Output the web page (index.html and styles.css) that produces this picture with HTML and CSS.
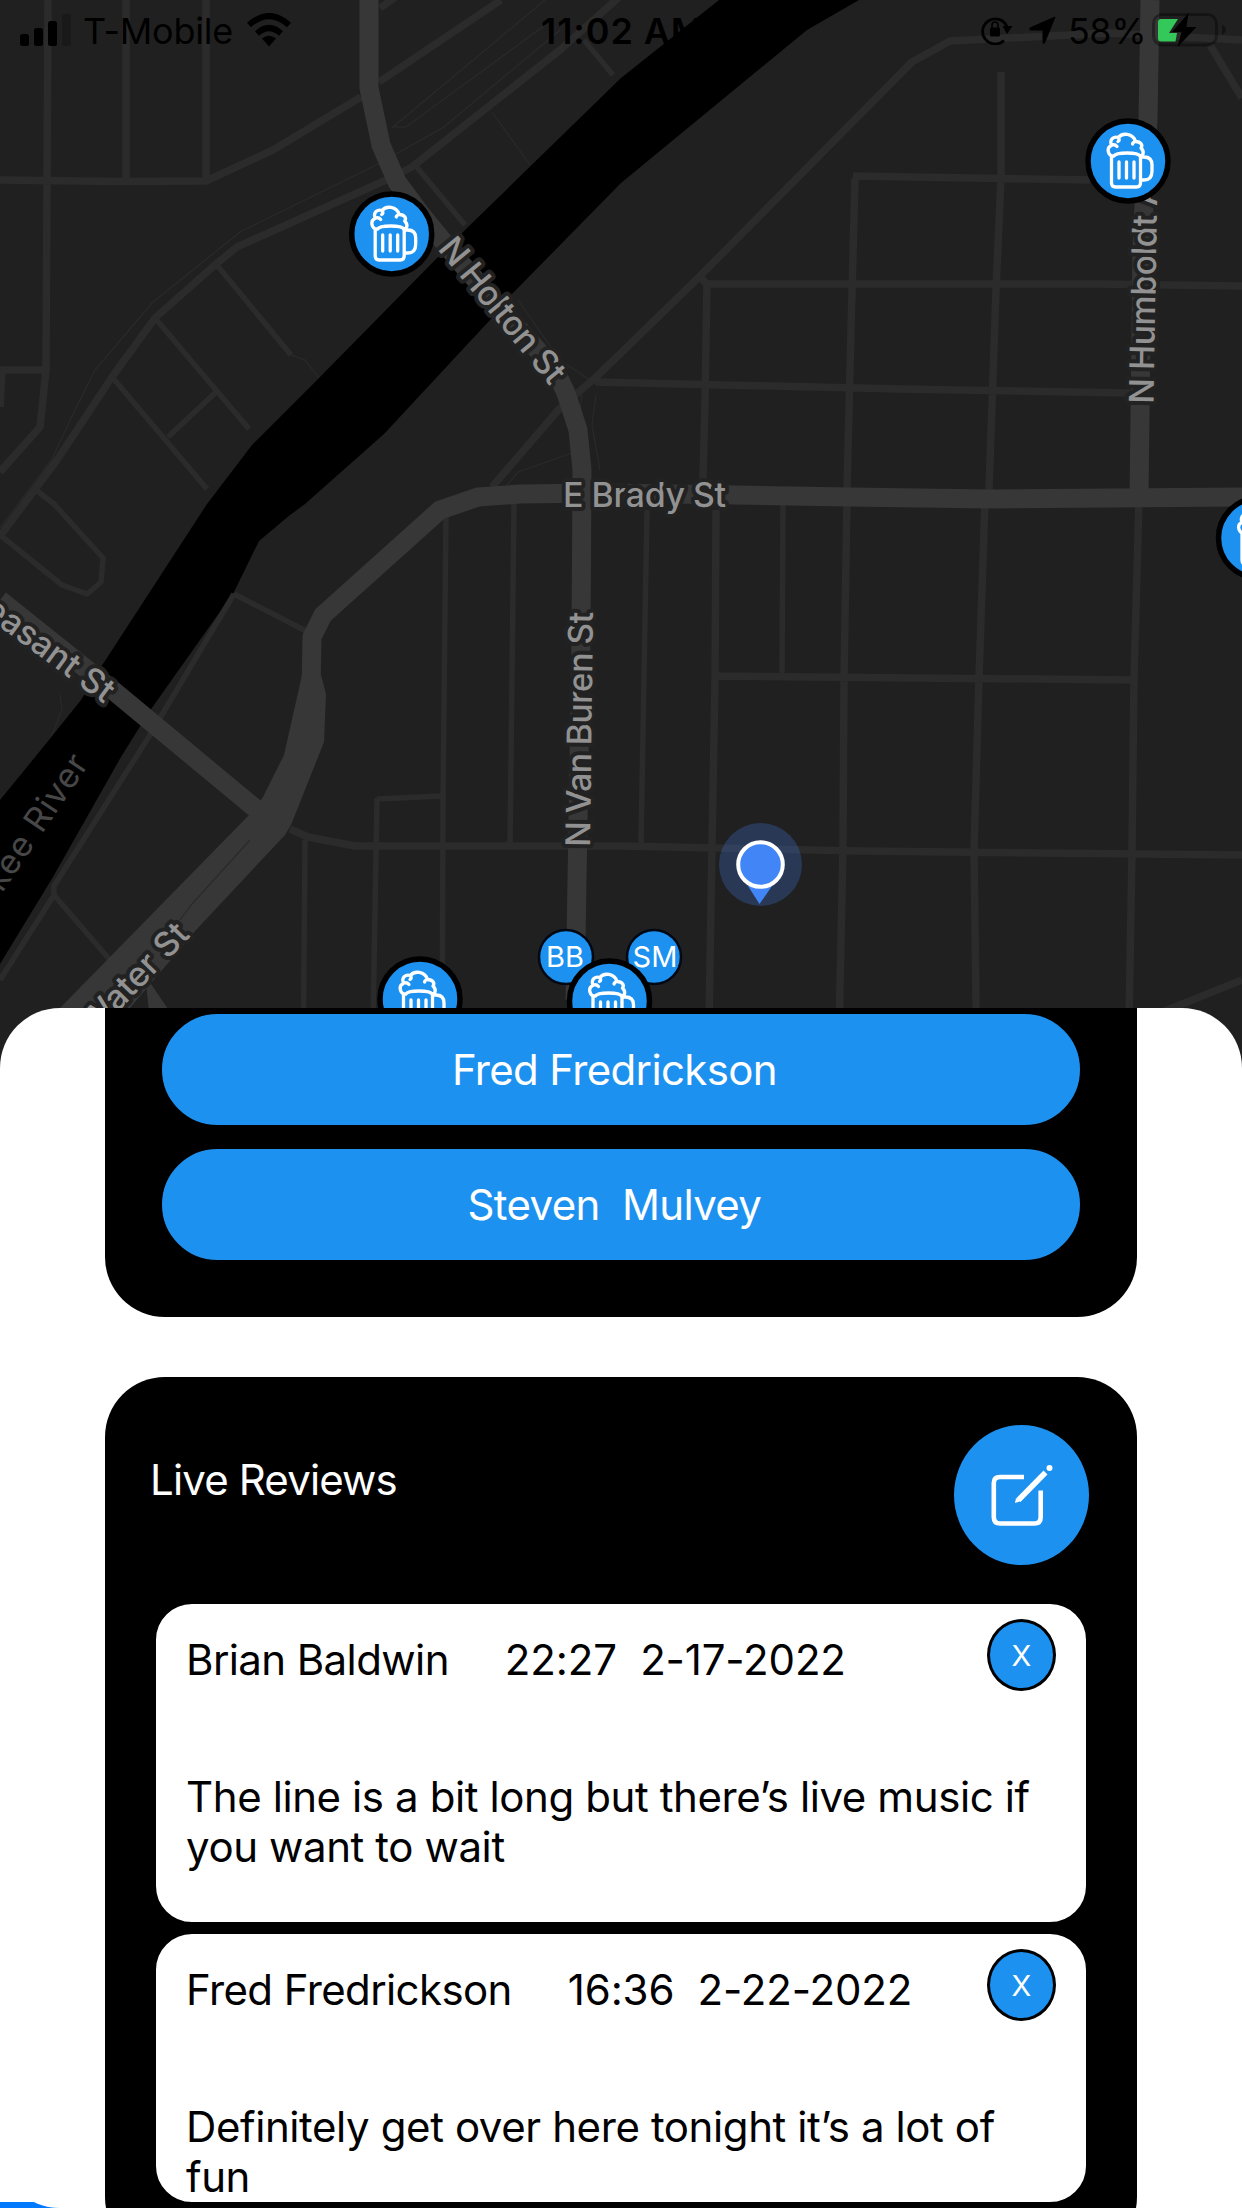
FILE: index.html
```html
<!DOCTYPE html>
<html lang="en">
<head>
<meta charset="utf-8">
<meta name="viewport" content="width=device-width">
<title>Live Reviews</title>
<link rel="stylesheet" href="styles.css">
</head>
<body>
<main class="screen">
  <section class="map-area">
    <svg class="map" viewBox="0 0 1242 1080" width="1242" height="1080">
      <defs>
        <g id="beer">
          <circle r="40" class="pin"/>
          <g class="mug">
            <path d="M-16.5,-4.500V22q0,4 4,4H8.500q4,0 4,-4V-4.500"/>
            <path d="M13,-4H16q8,0 8,8V10q0,9 -8,9H13"/>
            <path d="M-9,1V17M-1.500,1V17M6,1V17"/>
            <path d="M-16.500,-5C-21,-8 -21,-14 -16.500,-15.500C-19,-22 -14,-25 -9.500,-23.500C-6,-28.500 5,-28 7.500,-19.500C13,-19.500 15,-15.500 13,-13C17,-9 15,-5 12,-5C10,-9 -12,-9 -14,-5ZM-16,-16Q-13,-17 -11,-14.500M-9.500,-23.500Q-8,-21 -10,-19.500M7.500,-19.500Q5,-19 4.500,-17"/>
          </g>
        </g>
      </defs>
      <rect width="1242" height="1080" class="land"/>
      <g class="path">
        <path d="M545,0L393,127H406L545,25"/>
        <path d="M0,528L52,459L75,410L95,370L152,303L240,232L380,163L444,127L560,30"/>
        <path d="M492,112L530,165M291,355L305,360L319,378M582,395L575,440M596,395L592,425L600,470M507,485L518,472L575,452"/>
        <path d="M518,300L560,360L590,380M60,695L62,710L50,740"/>
      </g>
      <path class="water" d="M719,0L621,78L465,230L440,255L319,378L252,445L207,504L101,667L81,700L40,751L0,800V964L53,877L121,757L149,712L234,592L259,541L290,515L305,504L384,434L490,320L513,293L621,183L807,30L859,0Z"/>
      <g class="street">
        <path d="M48,0L46,370L40,427L0,472M46,370H0M2,370L0,407M126,0V180M206,0V181M0,180L120,181.500L206,181L273,150L361,97M379,82L501,0M380,8L397,-4"/>
        <path d="M627,-10L560,50L412,167L384,181L237,247L216,264L155,318L112,377L57,460L33,492L0,536"/>
        <path d="M216,264L291,355M155,318L249,429M112,377L207,489M215,393L168,437M36,490L54,504L103,558L101,582L87,594L62,585L0,535M584,40L613,75M415,165L465,225" class="narrow"/>
        <path d="M492,487L560,408L595,378L621,353L698,278L912,62L950,41L1110,33L1242,40M1210,45L1242,98M698,275L707,284L705,400L703,480M855,178L851,330L847,490M1001,72V178L996,290L989,490M853,176L1090,180M707,284H1100L1242,286M595,382L900,389L1130,393"/>
        <path d="M446,515L443,800L442,1080M514,504L510,846M305,840L303,1080M377,798L372,1080M377,799L442,796M234,594L306,631M234,594L160,718L150,735L54,886V895L0,980M54,895L110,960M647,510L641,843M783,504L782,674" class="narrow"/>
        <path d="M716,510L715,680L712,846L708,1080M847,500L844,680L843,846L838,1080M985,500L979,678L974,850L977,1080M1139,500L1134,678L1132,852L1128,1080M716,676L1134,680M290,829L308,837L355,846H621L860,851L1242,855M1145,1019L1242,980"/>
      </g>
      <g class="avenue">
        <path d="M369,0V88L381,145L397,182L420,213L460,262L555,370L566,393L578,430L582,470L581,640L575,1000"/>
        <path d="M1150,0L1148,120L1142,250L1139,497M1242,497L990,499L850,497L735,495L600,493L520,494L478,497L440,510L323,615L312,637L311,690M0,600L115,692L262,814"/>
      </g>
      <path class="avenue-fill" d="M302,675H321L326,694L324,742L291,825L285,835L196,930L130,1008V1080H0L60,1008L252,812L263,797L284,755ZM145,975L170,1012L150,1020Z"/>
      <path class="path" d="M250,840L192,904L180,920"/>
      <g class="label">
        <text transform="translate(437 249) rotate(50.500)" textLength="178">N Holton St</text>
        <text transform="translate(1153.500 404) rotate(-89)" textLength="189">N Humboldt</text>
        <text transform="translate(1157 206) rotate(-89)">Ave</text>
        <text transform="translate(590 847) rotate(-89.300)" textLength="235">N Van Buren St</text>
        <text x="563" y="507" textLength="163">E Brady St</text>
        <text transform="translate(104 704) rotate(36.500)" text-anchor="end">W Pleasant St</text>
        <text transform="translate(191 936) rotate(-46)" text-anchor="end">N Water St</text>
        <text class="river" transform="translate(90 763) rotate(-56)" text-anchor="end">Milwaukee River</text>
      </g>
      <circle cx="760.500" cy="864.500" r="41.500" class="halo"/>
      <path d="M748,886H772L759.500,904Z" class="me"/>
      <circle cx="760.500" cy="864.500" r="22.300" class="me dot"/>
      <g class="initials">
        <circle cx="566" cy="957" r="27"/>
        <circle cx="654" cy="957" r="27"/>
        <text x="565" y="967">BB</text>
        <text x="655" y="967">SM</text>
      </g>
      <use href="#beer" x="391.700" y="234"/>
      <use href="#beer" x="1128" y="161"/>
      <use href="#beer" x="1258.500" y="538"/>
      <use href="#beer" x="420" y="999"/>
      <use href="#beer" x="609.500" y="1001"/>
    </svg>
    <header class="status">
      <div class="status-side">
        <svg class="signal" width="51" height="32" viewBox="0 0 51 32"><rect y="20" width="9" height="12" rx="2.500"/><rect x="14" y="14" width="9" height="18" rx="2.500"/><rect x="28" y="7" width="9" height="25" rx="2.500"/><rect x="42" width="9" height="32" rx="2.500" opacity=".2"/></svg>
        <span class="carrier">T-Mobile</span>
        <svg width="46" height="34" viewBox="0 0 46 34"><path d="M3,12Q23,-6 43,12M11,20.500Q23,9.500 35,20.500" class="wifi"/><path d="M16,25.500Q23,20 30,25.500L23,33.500Z"/></svg>
      </div>
      <span class="time">11:02 AM</span>
      <div class="status-side end">
        <svg width="32" height="30" viewBox="0 0 32 30"><path d="M23,25.500A12.600,12.600 0 1 1 26,12" class="ring"/><path d="M21.500,11H31.500L26,19Z"/><rect x="9" y="12.500" width="10" height="9" rx="1.500"/><path d="M11,13V10a3,3 0 0 1 6,0V13" class="shackle"/></svg>
        <svg class="arrow" width="27" height="28" viewBox="0 0 27 28"><path d="M26,1L15.500,27Q14.500,28 14,26.500V14H1.500Q0,13 1,12Z" stroke="#000" stroke-linejoin="round"/></svg>
        <span class="percent">58%</span>
        <svg width="74" height="34" viewBox="0 0 74 34"><rect x="1.500" y="1.500" width="63" height="30.500" rx="9" class="cell"/><path d="M70,11.500Q78,17 70,22Z" class="nub"/><path class="charge" d="M9,6H26L17,20H25L23.500,28.500H9Q6,28.500 6,25V9.500Q6,6 9,6Z"/><path d="M36.500,0L20,19H29.500L25.500,34L44.500,14H34.500Z"/></svg>
      </div>
    </header>
  </section>

  <div class="tab-edge"></div>
  <section class="sheet">
    <div class="card people">
      <button class="person">Fred Fredrickson </button>
      <button class="person">Steven  Mulvey </button>
    </div>
    <div class="card reviews">
      <div class="reviews-head">
        <h2>Live Reviews</h2>
        <button class="compose" aria-label="Write a review">
          <svg width="64" height="64" viewBox="0 0 64 64"><path d="M34,14H10Q3.800,14 3.800,20V54Q3.800,60.500 10,60.500H44.500Q50.700,60.500 50.700,54V27.500" class="box"/><path d="M28.500,37L55.500,9.500" class="pen"/><path d="M25,40L26,35L31,38Z"/><circle cx="59.500" cy="5" r="3"/></svg>
        </button>
      </div>
      <article class="review">
        <div class="review-head"><span>Brian Baldwin</span><time>22:27  2-17-2022</time><button class="remove">X</button></div>
        <p>The line is a bit long but there’s live music if you want to wait</p>
      </article>
      <article class="review">
        <div class="review-head"><span>Fred Fredrickson</span><time>16:36  2-22-2022</time><button class="remove">X</button></div>
        <p>Definitely get over here tonight it’s a lot of fun</p>
      </article>
    </div>
  </section>
</main>
</body>
</html>
```
FILE: styles.css
```css
* { box-sizing: border-box; }
html, body { margin: 0; height: 2208px; overflow: hidden; background: #fff; }
body { font-family: Inter, "Liberation Sans", sans-serif; font-size: 42px; color: #000; }
button { font: inherit; padding: 0; }

.screen { position: relative; width: 1242px; height: 2208px; overflow: hidden; }
/* The map runs on behind the sheet's rounded top corners. */
.map-area { position: relative; height: 1008px; }
.map { position: absolute; top: 0; left: 0; }
.land { fill: #202020; }
.water { fill: #000; }
.street path { fill: none; stroke: #2b2b2b; stroke-width: 7.500; stroke-linejoin: round; }
.street .narrow { stroke-width: 5.500; }
.path { fill: none; stroke: #2a2a2a; stroke-width: 1.200; }
.avenue path { fill: none; stroke: #373737; stroke-width: 19; stroke-linejoin: round; }
.avenue-fill { fill: #373737; }
.label text {
  font-size: 34px; font-weight: 500; fill: #929292;
  stroke: #222; stroke-width: 8px; stroke-linejoin: round; paint-order: stroke;
}
.label .river { fill: #474747; stroke: none; font-weight: 400; letter-spacing: 1px; }
.halo { fill: #4285f4; fill-opacity: .25; }
.me { fill: #4285f7; }
.dot { stroke: #fff; stroke-width: 4; }
.pin { fill: #1c91f0; stroke: #000; stroke-width: 5.500; }
.mug path { fill: none; stroke: #fff; stroke-width: 3.300; stroke-linecap: round; stroke-linejoin: round; }
.initials circle { fill: #1c91f0; stroke: #000814; stroke-width: 2.500; }
.initials text { font-size: 29px; fill: #fff; text-anchor: middle; }

.status {
  position: relative; display: grid; grid-template-columns: 1fr auto 1fr; align-items: center;
  height: 60px; padding: 0 16px 0 20px; font-size: 36px;
}
.status-side { display: flex; align-items: center; }
.end { justify-content: flex-end; }
.carrier { margin: 2px 13px 0 12px; letter-spacing: -.2px; }
.time { font-weight: 600; margin-top: 2px; letter-spacing: .9px; }
.arrow { margin: 0 12px 0 16px; }
.percent { margin: 2px 6px 0 0; letter-spacing: -.5px; }
.wifi { fill: none; stroke: #000; stroke-width: 6; }
.ring { fill: none; stroke: #000; stroke-width: 2.800; }
.shackle { fill: none; stroke: #000; stroke-width: 1.600; }
.cell { fill: none; stroke: #000; stroke-opacity: .35; stroke-width: 3; }
.nub { opacity: .4; }
.charge { fill: #34c759; }

.tab-edge { position: absolute; left: 0; bottom: 0; width: 60px; height: 6px; background: #007aff; }
.sheet {
  position: relative; height: 1200px; padding: 0 105px; overflow: hidden;
  display: flex; flex-direction: column; gap: 60px; background: #fff;
  border-radius: 60px;
}
.card { flex: none; background: #000; }
.people {
  display: flex; flex-direction: column; gap: 18px; height: 309px; padding: 3px 54px 0;
  border-radius: 0 0 60px 60px;
}
.person {
  height: 117px; padding: 0 2px 1px 0; border: 3px solid #000; border-radius: 60px; background: #1c91f0;
  color: #fff; white-space: pre; letter-spacing: -.65px;
}
.reviews { height: 880px; padding: 45px 45px 0; border-radius: 60px; }
.reviews-head { display: flex; justify-content: space-between; height: 176px; }
.reviews-head h2 { margin: 33px 0 0; font-size: 42px; font-weight: 400; line-height: 50px; letter-spacing: -.85px; color: #fff; }
.compose {
  width: 141px; height: 146px; border: 3px solid #000; border-radius: 50%; background: #1c91f0;
  display: flex; align-items: center; justify-content: center;
}
.compose svg { fill: #fff; }
.box, .pen { fill: none; stroke: #fff; stroke-width: 4.600; }
.pen { stroke-width: 5.500; }
.review { height: 330px; padding: 15px 30px 0; border: 6px solid #000; border-radius: 42px; background: #fff; }
.review + .review { height: 280px; }
.review-head { display: flex; align-items: center; height: 72px; }
.review-head span { margin-top: 8px; letter-spacing: -.6px; }
.review-head time { margin: 8px 0 0 56px; white-space: pre; letter-spacing: -.15px; }
.remove {
  width: 69px; height: 72px; margin-left: auto; border: 3px solid #000; border-radius: 50%;
  background: #1c91f0; color: #fff; font-size: 29px;
}
.review p { margin: 81px 0 0; line-height: 50px; letter-spacing: -.4px; }
```
